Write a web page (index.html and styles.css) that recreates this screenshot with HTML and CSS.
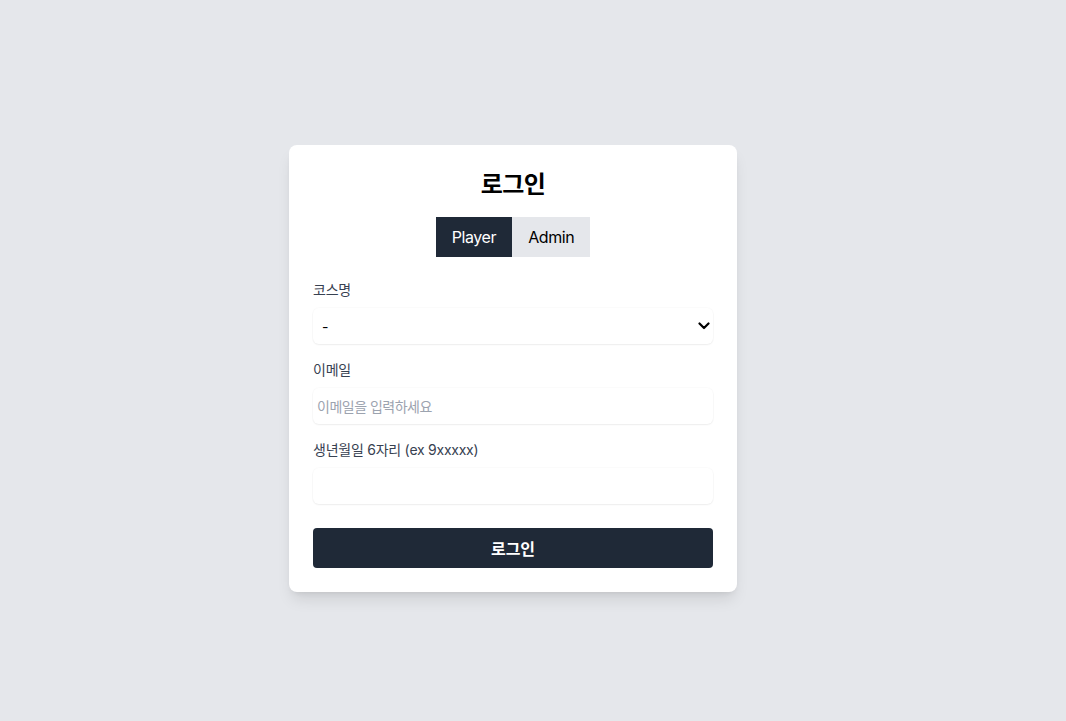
FILE: index.html
```html
<!DOCTYPE html>
<html lang="ko">
<head>
<meta charset="utf-8">
<title>로그인</title>
<link rel="stylesheet" href="styles.css">
</head>
<body>
<div class="page">
  <form class="card">
    <h1 class="title">로그인</h1>
    <div class="tabs">
      <button type="button" class="tab tab-active">Player</button>
      <button type="button" class="tab">Admin</button>
    </div>
    <div class="field">
      <label class="label">코스명</label>
      <div class="select-wrap">
        <select class="control select">
          <option>-</option>
        </select>
        <svg class="chevron" width="12" height="8" viewBox="0 0 12 8"><path d="M1.5 1.5 L6 6 L10.5 1.5" fill="none" stroke="#000" stroke-width="2.2" stroke-linecap="round" stroke-linejoin="round"/></svg>
      </div>
    </div>
    <div class="field">
      <label class="label">이메일</label>
      <input class="control" type="email" placeholder="이메일을 입력하세요">
    </div>
    <div class="field">
      <label class="label">생년월일 6자리 (ex 9xxxxx)</label>
      <input class="control" type="text">
    </div>
    <button type="button" class="submit">로그인</button>
  </form>
</div>
</body>
</html>
```

FILE: styles.css
```css
* { box-sizing: border-box; }
html, body { margin: 0; padding: 0; }
body {
  background: #e5e7eb;
  font-family: Inter, "Noto Sans CJK KR", sans-serif;
  color: #000;
  min-height: 721px;
}
.page {
  padding-top: 145px;
  padding-left: 289px;
}
.card {
  width: 448px;
  background: #fff;
  border-radius: 8px;
  padding: 24px;
  box-shadow: 0 10px 15px -3px rgba(0,0,0,0.1), 0 4px 6px -4px rgba(0,0,0,0.1);
  display: flex;
  flex-direction: column;
}
.title {
  margin: 0 0 16px;
  font-size: 24px;
  line-height: 32px;
  font-weight: 700;
  letter-spacing: -0.5px;
  text-align: center;
}
.tabs {
  display: flex;
  justify-content: center;
  margin-bottom: 23px;
}
.tab {
  border: none;
  height: 40px;
  padding: 0 16px;
  font-family: Inter, "Noto Sans CJK KR", sans-serif;
  font-size: 16px;
  letter-spacing: -0.4px;
  background: #e5e7eb;
  color: #000;
}
.tab-active {
  background: #1f2937;
  color: #fff;
}
.field {
  display: flex;
  flex-direction: column;
  margin-bottom: 16px;
}
.label {
  display: block;
  height: 20px;
  font-size: 14px;
  line-height: 20px;
  letter-spacing: -0.25px;
  color: #374151;
  margin-bottom: 8px;
}
.control {
  display: block;
  height: 36px;
  width: 100%;
  border: none;
  border-radius: 6px;
  background: #fff;
  box-shadow: 0 1px 2px 0 rgba(0,0,0,0.06), 0 0 0 1px rgba(0,0,0,0.015);
  padding: 0 4px;
  font-family: Inter, "Noto Sans CJK KR", sans-serif;
  font-size: 14px;
  letter-spacing: -0.5px;
  color: #000;
  outline: none;
}
.control::placeholder { color: #9ca3af; }
.select-wrap { position: relative; }
.select {
  appearance: none;
  -webkit-appearance: none;
  padding-left: 9px;
}
.chevron {
  position: absolute;
  right: 3px;
  top: 14px;
  pointer-events: none;
}
.submit {
  margin-top: 8px;
  height: 40px;
  border: none;
  border-radius: 4px;
  background: #1f2937;
  color: #fff;
  font-family: Inter, "Noto Sans CJK KR", sans-serif;
  font-size: 16px;
  font-weight: 700;
}
```
